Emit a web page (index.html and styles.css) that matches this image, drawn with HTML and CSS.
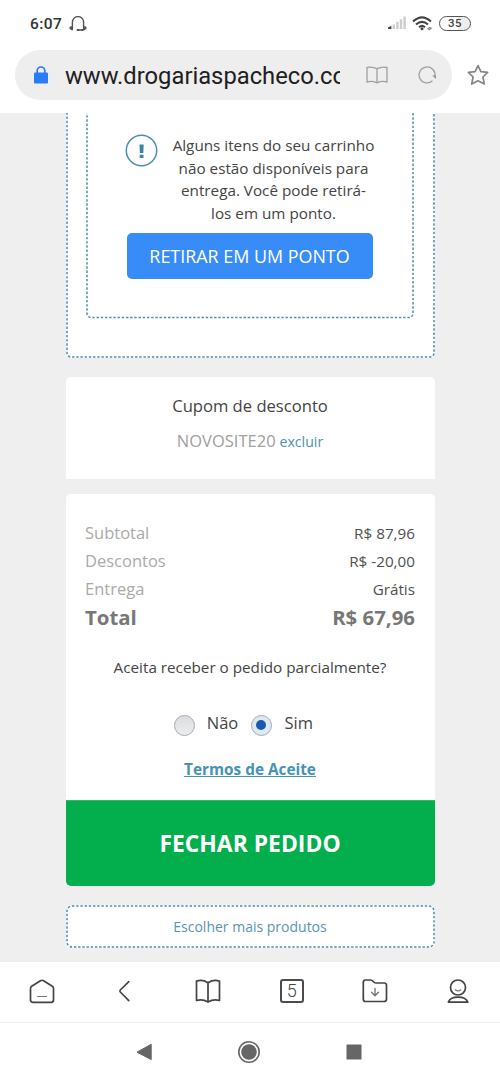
FILE: index.html
```html
<!DOCTYPE html>
<html lang="pt-BR">
<head>
<meta charset="utf-8">
<title>Drogarias Pacheco - Carrinho</title>
<link rel="stylesheet" href="styles.css">
</head>
<body>
<header class="status">
  <div class="status-left">
    <span class="clock">6:07</span>
    <svg class="headset" width="18" height="16" viewBox="0 0 18 16" fill="none" stroke="#555" stroke-width="1.4" stroke-linecap="round"><path d="M3.4 12.8V6.2A5.5 5.5 0 0 1 14.6 6.2V12.8M3.4 10.8C2 10.8 1.2 11.6 1.2 12.8M14.6 10.8C16 10.8 16.8 11.6 16.8 12.8M9 14H13.4"/><path d="M1.6 11.6L3 13.4M15 13.4L16.4 11.6M8.6 14H9.6M13 14H13.6" stroke-width="2"/></svg>
  </div>
  <div class="status-right">
    <svg width="20" height="14" viewBox="0 0 20 14"><path d="M0 13V11.5L3.400 9.800V13Z" fill="#444"/><path d="M4.600 8.400h2.400V13H4.600zM8.200 5.800h2.400V13H8.200zM11.800 3.200h2.400V13h-2.400zM15.400.5h2.400V13h-2.400z" fill="#cdcdcd"/></svg>
    <svg width="21" height="15" viewBox="0 0 21 15" fill="none" stroke="#444" stroke-width="2"><path d="M0 5.6Q9-2.8 18 5.6M3 8.6Q9 3.2 15 8.6M6 11.2Q9 8.6 12 11.2"/><circle cx="9" cy="12.8" r="1.5" fill="#444" stroke="none"/><path d="M15 12.800l1.600-1.400 1.600.8-1.700 1.600z" stroke="#888" stroke-width="1.2"/></svg>
    <span class="battery">35</span>
  </div>
</header>
<div class="address">
  <div class="url-pill">
    <svg class="lock" width="16" height="18" viewBox="0 0 16 18"><rect x="1" y="6.5" width="14" height="11" rx="1.3" fill="#2b7af8"/><path d="M4.2 7V4.8a3.8 3.8 0 0 1 7.6 0V7" fill="none" stroke="#2b7af8" stroke-width="1.7"/></svg>
    <span class="url">www.drogariaspacheco.co</span>
    <svg class="reader" width="22" height="18" viewBox="0 0 22 18" fill="none" stroke="#a0a0a0" stroke-width="1.3" stroke-linejoin="round"><path d="M11 2.7Q6 .3 1 1.5V16Q6 14.6 11 16.8Q16 14.6 21 16V1.5Q16 .3 11 2.7V16.8"/></svg>
    <svg class="reload" width="20" height="20" viewBox="0 0 20 20"><path d="M15.5 15.8A8 8 0 1 1 18 11" fill="none" stroke="#a0a0a0" stroke-width="1.3"/><path d="M15.2 10.5H19V14Z" fill="#929292"/></svg>
  </div>
  <svg class="star" width="22" height="22" viewBox="0 0 22 22" fill="none" stroke="#858585" stroke-width="1.7" stroke-linejoin="round"><path d="M11 1.6L13.9 7.6 20.6 8.4 15.9 13 17.3 20 11 16.8 4.7 20 6.1 13 1.4 8.4 8.1 7.6Z"/></svg>
</div>
<main class="page">
  <section class="delivery">
    <svg class="outline" aria-hidden="true"><rect x="1" y="-20" width="367" height="264" rx="4"/></svg>
    <div class="notice">
      <svg class="outline" aria-hidden="true"><rect x="1" y="-20" width="326" height="224.500" rx="4"/></svg>
      <div class="notice-row">
        <svg class="warn" width="33" height="33" viewBox="0 0 33 33"><circle cx="16.500" cy="16.500" r="15.200" fill="none" stroke="#4b8db8" stroke-width="1.5"/><path d="M14.500 10.500h4.200l-.4 8.500h-3.400zM14.700 20.800h3.800v3.200h-3.800z" fill="#3984ad"/></svg>
        <p class="notice-text">Alguns itens do seu carrinho<br>não estão disponíveis para<br>entrega. Você pode retirá-<br>los em um ponto.</p>
      </div>
      <button class="pickup">RETIRAR EM UM PONTO</button>
    </div>
  </section>
  <section class="coupon">
    <h2 class="coupon-title">Cupom de desconto</h2>
    <p class="coupon-line"><span class="code">NOVOSITE20</span><a class="remove">excluir</a></p>
  </section>
  <section class="summary">
    <dl class="totals">
      <div class="row"><dt>Subtotal</dt><dd>R$ 87,96</dd></div>
      <div class="row"><dt>Descontos</dt><dd>R$ -20,00</dd></div>
      <div class="row"><dt>Entrega</dt><dd>Grátis</dd></div>
      <div class="row total"><dt>Total</dt><dd>R$ 67,96</dd></div>
    </dl>
    <p class="question">Aceita receber o pedido parcialmente?</p>
    <div class="choices">
      <span class="radio"></span><span class="no">Não</span>
      <span class="radio checked"></span><span class="yes">Sim</span>
    </div>
    <a class="terms">Termos de Aceite</a>
    <button class="checkout">FECHAR PEDIDO</button>
  </section>
  <a class="more"><svg class="outline" aria-hidden="true"><rect x="1" y="1" width="367" height="41" rx="5"/></svg><span>Escolher mais produtos</span></a>
</main>
<nav class="toolbar">
  <span class="tool"><svg width="26" height="26" viewBox="0 0 26 26"><path d="M1.500 10.500Q1.500 8.800 3 8L11.500 2.700Q13 1.800 14.500 2.700L23 8Q24.500 8.800 24.500 10.500V22Q24.500 24.300 22.200 24.300H3.800Q1.500 24.300 1.500 22Z"/><path d="M8.500 18.500H17.500" stroke="#777" stroke-width="1.2"/></svg></span>
  <span class="tool"><svg width="26" height="26" viewBox="0 0 26 26"><path d="M16.800 3.700L8.300 12Q7.500 13 8.300 14L16.800 22.700"/></svg></span>
  <span class="tool"><svg width="26" height="26" viewBox="0 0 26 26"><path d="M13 4.800Q7.500 1.200 1.500 3.100V22.500Q7.500 20.800 13 24Q18.500 20.800 24.500 22.500V3.100Q18.500 1.200 13 4.800V24"/></svg></span>
  <span class="tool"><span class="tabs">5</span></span>
  <span class="tool"><svg width="26" height="26" viewBox="0 0 26 26"><path d="M3.500 2H8.500Q10 2 11.200 3.500Q12.400 5 14 5H22Q24.500 5 24.500 7.300V21Q24.500 23.500 22 23.500H3.500Q1.300 23.500 1.300 21V4.500Q1.300 2 3.500 2Z"/><path d="M13 10.500V17.500M9.500 14.200L13 17.700 16.500 14.200" stroke="#777" stroke-width="1.400"/></svg></span>
  <span class="tool"><svg width="26" height="26" viewBox="0 0 26 26"><circle cx="13" cy="9.500" r="7.500"/><path d="M3.400 24.100C4.500 20.500 8.500 19.100 13 19.100S21.500 20.500 22.800 24.100Z"/><path d="M10.200 11.800Q13 14 15.800 11.800" stroke="#777" stroke-width="1.200"/></svg></span>
</nav>
<nav class="system">
  <svg width="16" height="18" viewBox="0 0 16 18"><path d="M15.200 1.200V16.600L1 9.200Z" fill="#666" stroke="#666"/></svg>
  <svg width="24" height="24" viewBox="0 0 24 24"><circle cx="12" cy="12" r="10.200" fill="none" stroke="#666" stroke-width="1.600"/><circle cx="12" cy="12" r="7.800" fill="#666"/></svg>
  <svg width="16" height="16" viewBox="0 0 16 16"><rect x=".5" y=".5" width="15" height="15" rx=".5" fill="#666"/></svg>
</nav>
</body>
</html>
```
FILE: styles.css
```css
* { box-sizing: border-box; }
body { margin: 0; width: 500px; height: 1082px; overflow: hidden; background: #fff; font-family: "Open Sans", "Noto Sans", sans-serif; color: #444; }
p, h2, dl, dd { margin: 0; }
svg { display: block; flex: none; }
button { border: 0; font-family: inherit; display: block; padding: 0; }
.status { height: 50px; display: flex; justify-content: space-between; padding: 14px 29px 0 30px; align-items: flex-start; }
.status-left, .status-right { display: flex; align-items: center; }
.status-left { gap: 7px; height: 19px; }
.status-right { height: 18px; gap: 5px; }
.status-right svg { overflow: visible; }
.clock { font: 500 15.500px/18px Roboto, sans-serif; letter-spacing: .4px; width: 32px; white-space: nowrap; color: #333; }
.battery { width: 32px; height: 15px; border: 1.500px solid #555; border-radius: 8px; font: 500 11.500px/13px Roboto, sans-serif; text-align: center; letter-spacing: .4px; background: linear-gradient(90deg, #fff 60%, #ededed 60%); }
.address { height: 63px; display: flex; align-items: flex-start; padding-left: 15px; }
.url-pill { width: 437px; height: 50px; border-radius: 25px; background: #eee; display: flex; align-items: center; padding-left: 18px; }
.url { margin-left: 16px; width: 275px; overflow: hidden; white-space: nowrap; font: 23.750px/32px Roboto, sans-serif; color: #202020; margin-top: 2px; }
.reader { margin-left: 26px; }
.reload { margin-left: 29px; }
.star { margin: 14px 0 0 15px; }
.page { height: 849px; background: #efefef; display: flex; flex-direction: column; align-items: center; overflow: hidden; }
.delivery { position: relative; width: 369px; height: 245px; background: #fff; border-radius: 0 0 5px 5px; padding-left: 20px; flex: none; }
.outline { position: absolute; left: 0; top: 0; width: 100%; height: 100%; fill: none; stroke: #4c8fae; stroke-width: 1.500px; stroke-dasharray: 2.400 1.800; }
.notice { position: relative; width: 328px; height: 206px; padding: 21px 0 0 39px; }
.notice-row { display: flex; gap: 14px; height: 99px; }
.notice-text { width: 204px; text-align: center; font-size: 15.250px; line-height: 22.700px; white-space: nowrap; }
.pickup { width: 246px; height: 46px; margin-left: 2px; border-radius: 5px; background: #388cf8; color: #fff; font-size: 17.900px; }
.coupon { width: 369px; height: 102px; margin-top: 19px; border-radius: 5px 5px 0 0; background: #fff; text-align: center; padding-top: 17px; flex: none; }
.coupon-title { font-size: 16.600px; font-weight: 400; line-height: 24px; }
.coupon-line { margin-top: 11px; line-height: 24px; display: flex; justify-content: center; align-items: baseline; gap: 4px; }
.code { font-size: 16.500px; color: #a0a0a0; }
.remove { font-size: 14.100px; color: #4b92b1; }
.summary { width: 369px; height: 392px; margin-top: 15px; background: #fff; border-radius: 5px; text-align: center; flex: none; overflow: hidden; display: flex; flex-direction: column; align-items: center; padding-top: 25px; }
.totals { width: 330px; }
.row { display: flex; justify-content: space-between; line-height: 28.100px; font-size: 16.500px; color: #aaa; }
.row dd { font-size: 15.250px; color: #505050; }
.row.total, .row.total dd { font-weight: 700; font-size: 20.400px; color: #777; }
.question { font-size: 15.250px; line-height: 22px; margin-top: 24.500px; }
.choices { display: flex; align-items: center; width: 153px; height: 24px; margin-top: 33px; font-size: 16.500px; white-space: nowrap; }
.radio { width: 21px; height: 21px; border: 1px solid #a5a9ac; border-radius: 50%; background: linear-gradient(#dadddf, #eceded); margin-top: 5px; flex: none; display: flex; align-items: center; justify-content: center; }
.radio.checked { background: #dfe9f2; }
.radio.checked::after { content: ""; width: 10px; height: 10px; border-radius: 50%; background: #1b59ac; }
.no { width: 32px; margin: 0 12px; }
.yes { margin-left: 13px; }
.terms { font-size: 15.350px; line-height: 22px; font-weight: 700; color: #4593b6; text-decoration: underline; margin-top: 23px; }
.checkout { width: 369px; height: 86px; margin-top: auto; background: #03ae4c; border-top: 1px solid #3bb36b; color: #fff; font-size: 22.900px; font-weight: 700; flex: none; }
.more { position: relative; width: 369px; height: 43px; margin-top: 19px; background: #fff; border-radius: 5px; display: flex; align-items: center; justify-content: center; font-size: 14px; color: #5794b3; flex: none; }
.toolbar { height: 61px; padding-bottom: 2px; display: grid; grid-template-columns: repeat(6, 1fr); border-bottom: 1px solid #eee; }
.tool { display: flex; align-items: center; justify-content: center; }
.tool svg { fill: none; stroke: #444; stroke-width: 1.700px; stroke-linecap: round; stroke-linejoin: round; }
.tabs { width: 24px; height: 24px; border: 2px solid #4c4c4c; border-radius: 3px; font: 300 18px/20px Roboto, sans-serif; text-align: center; }
.system { height: 59px; display: flex; align-items: center; justify-content: center; gap: 85px; padding: 0 2px 2px 0; }
```
